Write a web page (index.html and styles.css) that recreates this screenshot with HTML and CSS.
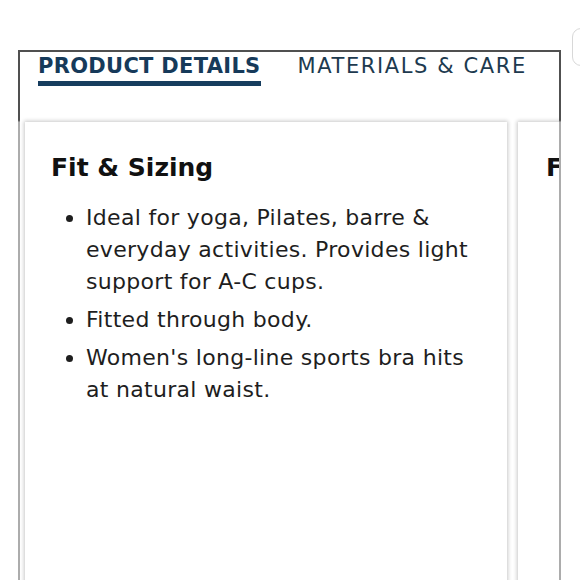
FILE: index.html
```html
<!DOCTYPE html>
<html>
<head>
<meta charset="utf-8">
<link rel="stylesheet" href="styles.css">
</head>
<body>
<div class="peek"></div>
<div class="frame">
  <div class="tabs">
    <div class="tab active">PRODUCT DETAILS</div>
    <div class="tab">MATERIALS &amp; CARE</div>
  </div>
  <div class="cards">
    <div class="card">
      <h2 class="card-title">Fit &amp; Sizing</h2>
      <ul class="list">
        <li>Ideal for yoga, Pilates, barre &amp; everyday activities. Provides light support for A-C cups.</li>
        <li>Fitted through body.</li>
        <li>Women's long-line sports bra hits at natural waist.</li>
      </ul>
    </div>
    <div class="card">
      <h2 class="card-title">Features</h2>
    </div>
  </div>
</div>
</body>
</html>
```

FILE: styles.css
```css
html, body {
  margin: 0;
  padding: 0;
  background: #fff;
  height: 580px;
  overflow: hidden;
  font-family: "DejaVu Sans", "Liberation Sans", sans-serif;
}

.peek {
  position: absolute;
  left: 572px;
  top: 28px;
  width: 40px;
  height: 36px;
  border: 1px solid #d8d8d8;
  border-radius: 9px;
}

.frame {
  margin: 50px 0 0 18px;
  width: 539px;
  height: 600px;
  border: 2px solid #555;
  border-bottom: none;
  border-image: linear-gradient(to bottom, #505050 0, #505050 70px, #acacac 72px, #acacac 100%) 2;
  overflow: hidden;
}

.tabs {
  display: flex;
  gap: 37px;
  padding: 1px 0 0 18px;
  height: 69px;
}

.tab {
  font-size: 21px;
  line-height: 26px;
  color: #1d3a4f;
  letter-spacing: 1.6px;
}

.tab.active {
  font-weight: 700;
  color: #163a5a;
  letter-spacing: 0.3px;
}

.tab.active::after {
  content: "";
  display: block;
  height: 5px;
  margin-top: 2px;
  background: #163d5e;
}

.cards {
  display: flex;
  gap: 11px;
  padding: 0 0 0 5px;
}

.card {
  flex: 0 0 482px;
  height: 520px;
  box-sizing: border-box;
  padding: 30px 26px;
  background: #fff;
  box-shadow: 0 0 4px 1px rgba(0, 0, 0, 0.22);
}

.card + .card {
  padding-left: 28px;
}

.card-title {
  margin: 0 0 18px 0;
  font-size: 25px;
  line-height: 32px;
  font-weight: 700;
  color: #111;
}

.list {
  margin: 0;
  padding: 0 0 0 35px;
  font-size: 22px;
  line-height: 32px;
  letter-spacing: 0.3px;
  color: #1e1e1e;
}

.list li {
  margin-bottom: 6px;
}
```
